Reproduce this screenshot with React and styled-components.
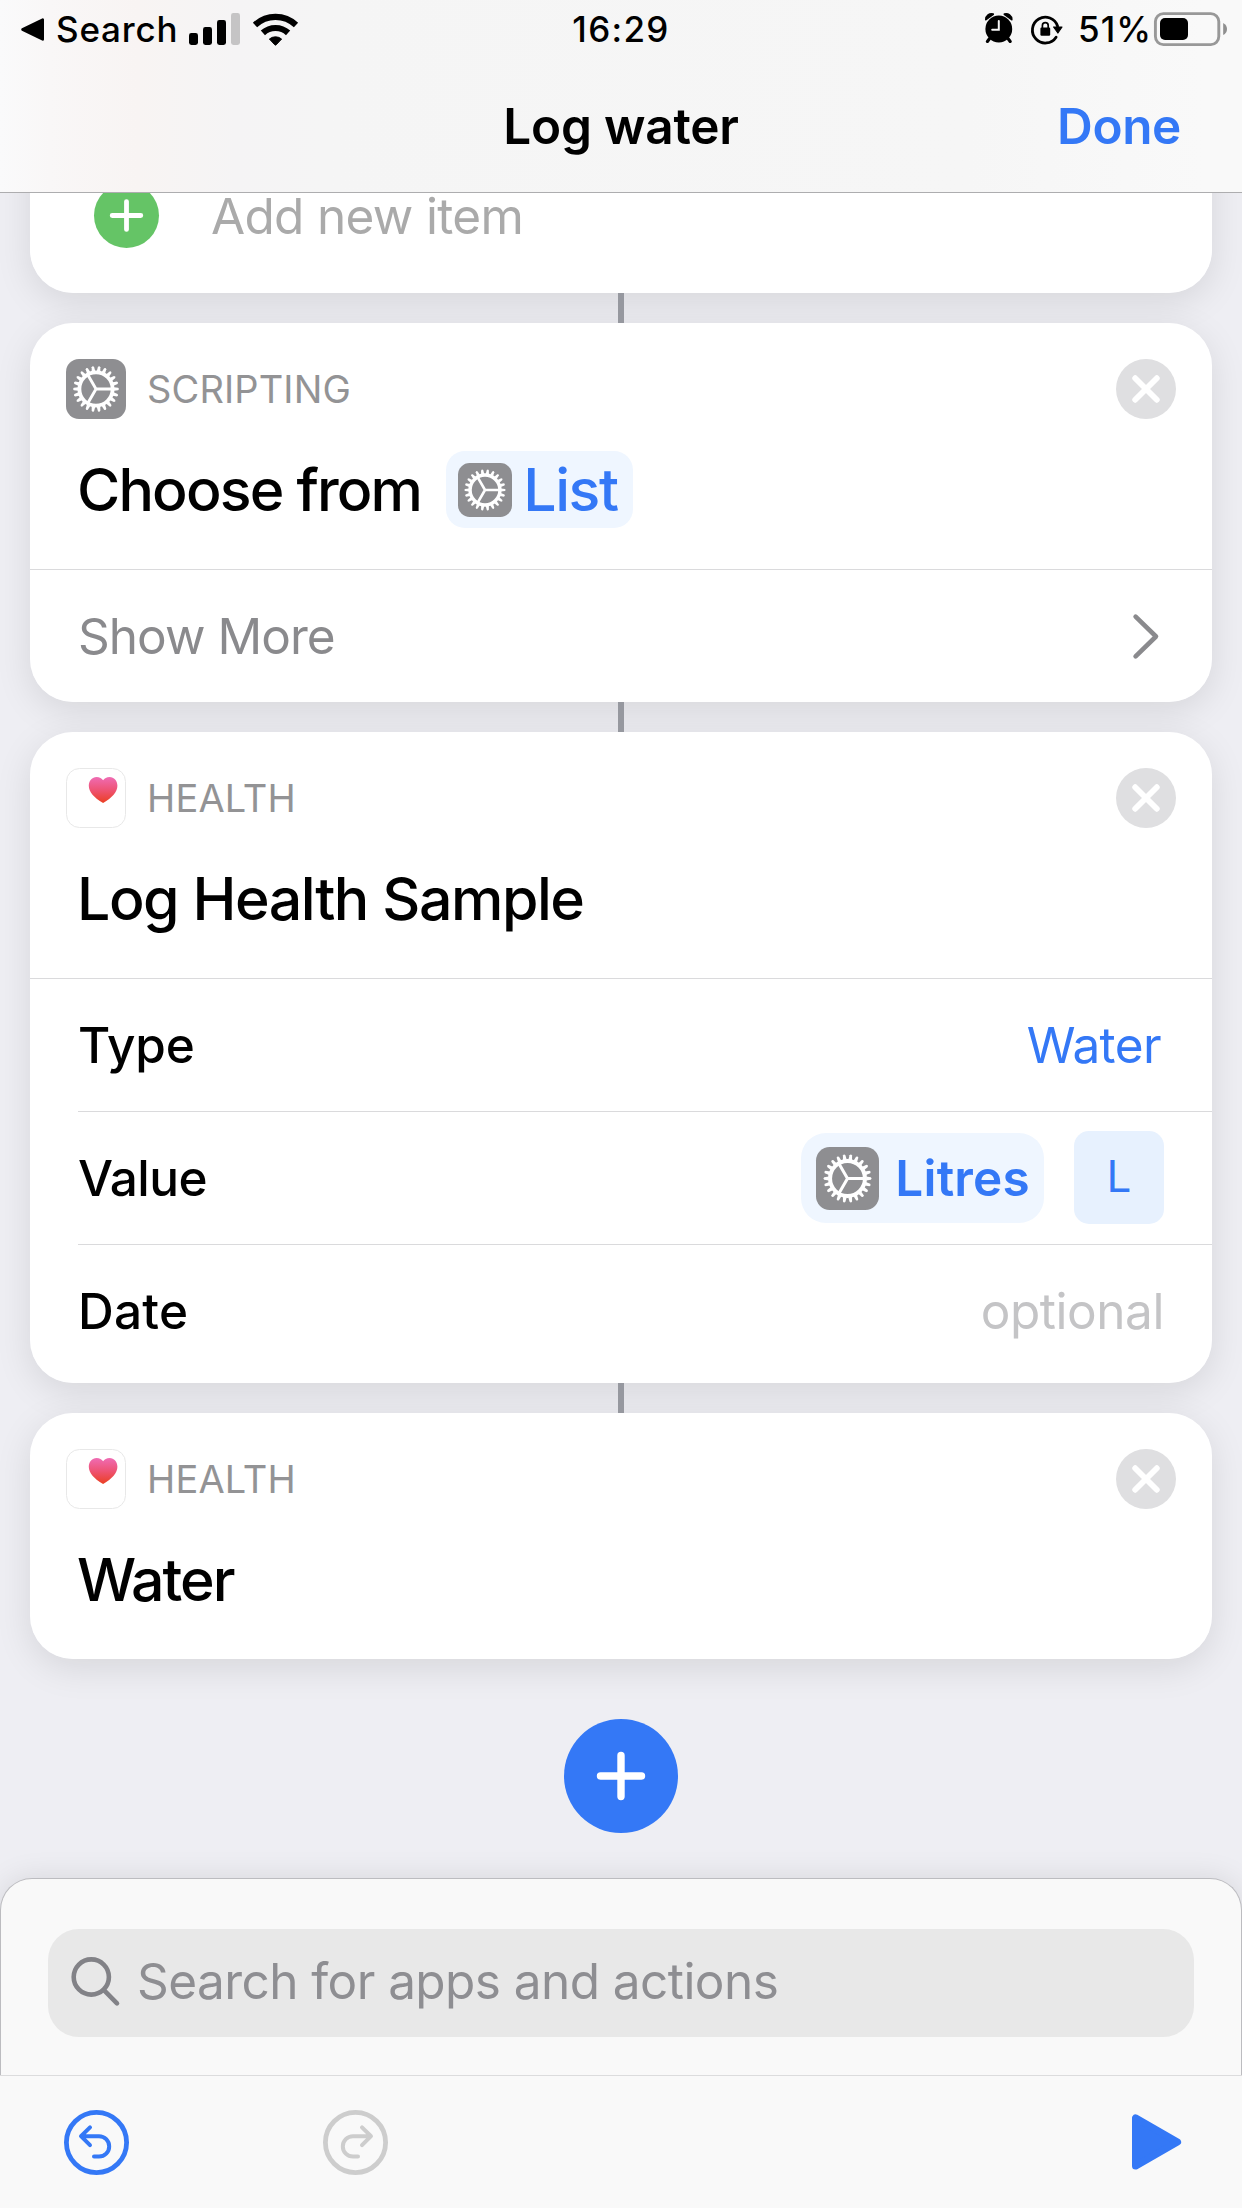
import React from 'react';
import styled, { createGlobalStyle } from 'styled-components';

const BLUE = '#3478f6';

const GlobalStyle = createGlobalStyle`
  *, *::before, *::after { box-sizing: border-box; }
  body {
    margin: 0;
    background: #eeeef3;
    font-family: Inter, "Liberation Sans", sans-serif;
    color: #000;
  }
  svg { display: block; flex: none; overflow: visible; }
`;

const Screen = styled.div`
  display: flex;
  flex-direction: column;
  width: 1242px;
  height: 2208px;
  overflow: hidden;
  background: #eeeef3;
  white-space: nowrap;
`;

const Text = styled.span`
  padding-top: 2px;
  font-size: ${(p) => p.$size || 49.5}px;
  font-weight: ${(p) => p.$weight || 400};
  letter-spacing: ${(p) => p.$track || 0}px;
  color: ${(p) => p.$color || '#000'};
  line-height: 1.2;
`;

/* ---------- header ---------- */

const Header = styled.header`
  position: relative;
  z-index: 2;
  flex: none;
  height: 193px;
  border-bottom: 1px solid #adadaf;
  background: linear-gradient(90deg, #fafafb 0%, #f9f7f7 4%, #f8f4f3 11%, #f5f4f5 19%, #f5f5f5 26%, #f6f6f6 78%, #f9f9f9 97%);
`;

const StatusBar = styled.div`
  display: grid;
  grid-template-columns: 1fr auto 1fr;
  align-items: center;
  height: 59px;
`;

const StatusLeft = styled.div`
  display: flex;
  align-items: center;
  padding-left: 21px;
`;

const StatusText = styled(Text)`
  padding: 0 0 2px;
  font-size: 35px;
  font-weight: 500;
`;

const BackLabel = styled(StatusText)`
  margin: 0 11px 0 12px;
`;

const StatusRight = styled.div`
  display: flex;
  align-items: center;
  justify-content: flex-end;
  padding-right: 14px;
`;

const Percent = styled(StatusText)`
  margin: 0 2px 0 15px;
`;

const NavBar = styled.div`
  display: grid;
  grid-template-columns: 1fr auto 1fr;
  align-items: center;
  height: 134px;
  padding: 0 61px;
`;

const DoneButton = styled(Text)`
  grid-column: 3;
  justify-self: end;
`;

const NavTitle = styled(Text)`
  grid-column: 2;
`;

/* ---------- cards ---------- */

const Flow = styled.main`
  flex: 1;
  min-height: 0;
  display: flex;
  flex-direction: column;
  align-items: center;
  isolation: isolate;
  padding: 0 30px;
`;

const Card = styled.section`
  position: relative;
  align-self: stretch;
  flex: none;
  border-radius: ${(p) => (p.$clipped ? '0 0 43px 43px' : '43px')};
  background: #fff;

  &::before {
    content: '';
    position: absolute;
    inset: ${(p) => (p.$clipped ? '-60px 0 0' : '0')};
    z-index: -1;
    border-radius: inherit;
    box-shadow: 0 9px 36px rgba(0, 0, 0, 0.1);
  }
`;

const Connector = styled.div`
  flex: none;
  width: 6px;
  height: 30px;
  background: #96989f;
`;

const AddItemRow = styled.div`
  display: flex;
  align-items: center;
  gap: 52px;
  height: 100px;
  padding: 0 64px 55px;
`;

const CardHead = styled.div`
  padding: 36px 36px 41px;
`;

const LabelRow = styled.div`
  display: flex;
  align-items: center;
  gap: 21px;
  height: 60px;
`;

const Category = styled(Text)`
  flex: 1;
`;

const TitleRow = styled.div`
  display: flex;
  align-items: center;
  gap: 25px;
  height: 77px;
  margin-top: 32px;
  padding-left: 11px;
`;

const Row = styled.div`
  display: flex;
  align-items: center;
  justify-content: space-between;
  height: 133px;
  margin-left: ${(p) => (p.$inset ? 48 : 0)}px;
  padding: 0 48px 0 ${(p) => (p.$inset ? 0 : 48)}px;
  border-top: 1px solid #dadadc;
`;

const Controls = styled.div`
  display: flex;
  align-items: center;
  gap: 30px;
`;

const Chip = styled.div`
  display: flex;
  align-items: center;
  gap: ${(p) => (p.$large ? 16 : 11.5)}px;
  height: ${(p) => (p.$large ? 90 : 77)}px;
  padding: ${(p) => (p.$large ? '0 14px 0 15.5px' : '0 15.5px 0 11.5px')};
  border-radius: ${(p) => (p.$large ? 25 : 19)}px;
  background: #eff6ff;
`;

const UnitBox = styled.div`
  display: flex;
  align-items: center;
  justify-content: center;
  width: 90px;
  height: 93px;
  margin-bottom: 1px;
  padding-bottom: 4px;
  border-radius: 15px;
  background: #e7f1fe;
`;

const RowValue = styled(Text)`
  margin-right: ${(p) => p.$gap || 0}px;
`;

const CardBottom = styled.div`
  height: 6px;
`;

const AddButton = styled.div`
  flex: none;
  display: flex;
  align-items: center;
  justify-content: center;
  width: 114px;
  height: 114px;
  margin-top: 60px;
  border-radius: 50%;
  background: ${BLUE};
`;

/* ---------- bottom ---------- */

const SearchPanel = styled.div`
  flex: none;
  height: 197px;
  padding: 50px 47px 0;
  border: 1px solid #bcbcc0;
  border-bottom: 0;
  border-radius: 32px 32px 0 0;
  background: #f9f9f9;
  box-shadow: 0 0 30px rgba(0, 0, 0, 0.1);
`;

const SearchField = styled.div`
  display: flex;
  align-items: center;
  gap: 17px;
  height: 108px;
  padding: 0 23px 3px;
  border-radius: 31px;
  background: #e8e8e8;
`;

const Placeholder = styled(Text)`
  padding-top: 0;
`;

const Toolbar = styled.footer`
  position: relative;
  flex: none;
  display: flex;
  align-items: center;
  height: 133px;
  padding: 0 61px 0 64px;
  border-top: 1px solid #dcdcdd;
  background: #f9f9f9;
`;

const HistoryButtons = styled.div`
  flex: 1;
  display: flex;
  gap: 194px;
`;

/* ---------- icons ---------- */

const BackIcon = () => (
  <svg width="23" height="59" viewBox="0 0 23 59">
    <path d="M1.5 29.5 L21.7 19.6 V39.4 Z" strokeWidth="2.6" stroke="#000" strokeLinejoin="round" />
  </svg>
);

const SignalIcon = () => (
  <svg width="52" height="59" viewBox="0 0 52 59">
    <rect x="0" y="33" width="9" height="12" rx="2.4" />
    <rect x="14" y="27" width="9" height="18" rx="2.4" />
    <rect x="28" y="20" width="9" height="25" rx="2.4" />
    <rect x="42" y="13" width="9" height="32" rx="2.4" fill="#c5c4c5" />
  </svg>
);

const WifiMark = styled.svg`
  margin-left: 12px;
`;

const WifiIcon = () => (
  <WifiMark width="45" height="59" viewBox="0 0 45 59">
    <g fill="none" stroke="#000" strokeWidth="6.2">
      <path d="M2 25 A29.8 29.8 0 0 1 43 25" />
      <path d="M9.9 32.9 A18.6 18.6 0 0 1 35.1 32.9" />
    </g>
    <path d="M16.4 39 A9.6 9.6 0 0 1 28.6 39 L23.2 44.8 Q22.5 45.5 21.8 44.8 Z" stroke="#000" strokeWidth="1" strokeLinejoin="round" />
  </WifiMark>
);

const AlarmMark = styled.svg`
  margin-right: 18px;
`;

const AlarmIcon = () => (
  <AlarmMark width="28" height="59" viewBox="0 0 28 59">
    <circle cx="13.8" cy="29" r="13.4" />
    <path d="M0.9 19.6 A5.6 5.6 0 0 1 8.2 14.2 Z M26.7 19.6 A5.6 5.6 0 0 0 19.4 14.2 Z" stroke="#000" strokeWidth="1.8" strokeLinejoin="round" />
    <path d="M4.6 38.6 L2.4 41.4 M23 38.6 L25.2 41.4" stroke="#000" strokeWidth="3.2" strokeLinecap="round" />
    <path d="M13.8 21 V29.8 H7.2" fill="none" stroke="#f6f6f6" strokeWidth="2" strokeLinecap="round" />
  </AlarmMark>
);

const RotationLockIcon = () => (
  <svg width="32" height="59" viewBox="0 0 32 59">
    <path d="M25.1 37.2 A12.9 12.9 0 1 1 26.6 26.2" fill="none" stroke="#000" strokeWidth="2.8" strokeLinecap="round" />
    <path d="M22.6 27 H31 L26.9 33 Z" stroke="#000" strokeWidth="1.2" strokeLinejoin="round" />
    <rect x="9.4" y="27.6" width="9.8" height="8.2" rx="1.2" />
    <path d="M11.4 28 V25.6 A2.9 2.9 0 0 1 17.2 25.6 V28" fill="none" stroke="#000" strokeWidth="1.7" />
  </svg>
);

const BatteryIcon = () => (
  <svg width="74" height="59" viewBox="0 0 74 59">
    <rect x="1.4" y="13.6" width="63.4" height="31" rx="8" fill="none" stroke="#989898" strokeWidth="2.9" />
    <rect x="6" y="18" width="28" height="22" rx="5" />
    <path d="M69.2 23 Q73 25 73 29 Q73 33 69.2 35 Z" fill="#8f8f8f" />
  </svg>
);

const PlusCircle = () => (
  <svg width="65" height="65" viewBox="0 0 65 65">
    <circle cx="32.5" cy="32.5" r="32.5" fill="#65c466" />
    <path d="M32.5 18.6 V46.4 M18.2 32.5 H46.8" stroke="#fff" strokeWidth="4.8" strokeLinecap="round" />
  </svg>
);

const teeth = Array.from({ length: 22 }, (_, i) => (i * 360) / 22);

const GearTile = ({ size = 60 }) => (
  <svg width={size} height={size} viewBox="0 0 60 60">
    <rect width="60" height="60" rx="13" fill="#8e8e91" />
    <g stroke="#fff" fill="none">
      <circle cx="30" cy="30" r="16.6" strokeWidth="3.8" />
      <path d="M30 30 H46.5 M30 30 L21.75 15.7 M30 30 L21.75 44.3" strokeWidth="2.9" />
    </g>
    {teeth.map((a) => (
      <path key={a} d="M47.8 28.2 L52.2 28.8 Q53.8 30 52.2 31.2 L47.8 31.8 Z" fill="#fff" transform={`rotate(${a} 30 30)`} />
    ))}
  </svg>
);

const HealthTile = () => (
  <svg width="60" height="60" viewBox="0 0 60 60">
    <defs>
      <linearGradient id="heart" x1="0" y1="0" x2="0" y2="1">
        <stop offset="0" stopColor="#ef6cb4" />
        <stop offset="0.5" stopColor="#ee5374" />
        <stop offset="1" stopColor="#eb3f22" />
      </linearGradient>
    </defs>
    <rect x="0.5" y="0.5" width="59" height="59" rx="13" fill="#fff" stroke="#e8e8e8" />
    <path
      d="M37.1 35 C28 29.8 22.8 24 22.8 17.8 C22.8 12.5 26.2 9 30.6 9 C33.6 9 35.8 10.3 37.1 12.2 C38.4 10.3 40.6 9 43.6 9 C48 9 51.4 12.5 51.4 17.8 C51.4 24 46.2 29.8 37.1 35 Z"
      fill="url(#heart)"
    />
  </svg>
);

const RemoveIcon = () => (
  <svg width="60" height="60" viewBox="0 0 60 60">
    <circle cx="30" cy="30" r="30" fill="#dfdfe1" />
    <path d="M19.2 19.2 L40.8 40.8 M40.8 19.2 L19.2 40.8" stroke="#fff" strokeWidth="5.8" strokeLinecap="round" />
  </svg>
);

const ChevronMark = styled.svg`
  margin-right: 5px;
`;

const Chevron = () => (
  <ChevronMark width="26" height="45" viewBox="0 0 26 45">
    <path d="M2.6 2.6 L23 22.5 L2.6 42.4" fill="none" stroke="#8a8a8d" strokeWidth="4.6" strokeLinecap="round" strokeLinejoin="round" />
  </ChevronMark>
);

const BigPlus = () => (
  <svg width="50" height="50" viewBox="0 0 50 50">
    <path d="M25 4.5 V45.5 M4.5 25 H45.5" stroke="#fff" strokeWidth="7.4" strokeLinecap="round" />
  </svg>
);

const SearchIcon = () => (
  <svg width="49" height="49" viewBox="0 0 49 49">
    <g fill="none" stroke="#828287" strokeWidth="4.6" strokeLinecap="round">
      <circle cx="20.3" cy="20" r="17.6" />
      <path d="M33.2 33.4 L46 46.4" />
    </g>
  </svg>
);

const HistoryIcon = ({ color, mirrored }) => (
  <svg width="65" height="65" viewBox="0 0 65 65">
    <g
      fill="none"
      stroke={color}
      strokeLinecap="round"
      strokeLinejoin="round"
      transform={mirrored ? 'translate(65 0) scale(-1 1)' : undefined}
    >
      <circle cx="32.5" cy="32.5" r="30.1" strokeWidth="4.8" />
      <path d="M26 17.3 L17 26.2 L26 35.2 M17.5 26.2 H35 A10.2 10.2 0 0 1 35 46.6 H30" strokeWidth="4" />
    </g>
  </svg>
);

const PlayIcon = () => (
  <svg width="49" height="56" viewBox="0 0 49 56">
    <path d="M3.5 3.9 V52.1 L45.6 28 Z" fill={BLUE} stroke={BLUE} strokeWidth="7" strokeLinejoin="round" />
  </svg>
);

/* ---------- page ---------- */

const ActionHead = ({ icon, category, track, children }) => (
  <CardHead>
    <LabelRow>
      {icon}
      <Category $size={38} $color="#939395" $track={track}>{category}</Category>
      <RemoveIcon />
    </LabelRow>
    <TitleRow>{children}</TitleRow>
  </CardHead>
);

export default function App() {
  return (
    <Screen>
      <GlobalStyle />
      <Header>
        <StatusBar>
          <StatusLeft>
            <BackIcon />
            <BackLabel $track={0.8}>Search</BackLabel>
            <SignalIcon />
            <WifiIcon />
          </StatusLeft>
          <StatusText $track={1.3}>16:29</StatusText>
          <StatusRight>
            <AlarmIcon />
            <RotationLockIcon />
            <Percent $track={1}>51%</Percent>
            <BatteryIcon />
          </StatusRight>
        </StatusBar>
        <NavBar>
          <NavTitle $weight={600} $track={-0.2}>Log water</NavTitle>
          <DoneButton $weight={600} $track={-0.39} $color={BLUE}>Done</DoneButton>
        </NavBar>
      </Header>

      <Flow>
        <Card $clipped>
          <AddItemRow>
            <PlusCircle />
            <Text $track={-0.68} $color="#aaaaaa">Add new item</Text>
          </AddItemRow>
        </Card>
        <Connector />
        <Card>
          <ActionHead icon={<GearTile />} category="SCRIPTING" track={0.12}>
            <Text $size={59} $weight={500} $track={-1.83}>Choose from</Text>
            <Chip>
              <GearTile size={54} />
              <Text $size={59} $weight={500} $track={-1.4} $color={BLUE}>List</Text>
            </Chip>
          </ActionHead>
          <Row>
            <Text $track={-0.96} $color="#8a8a8d">Show More</Text>
            <Chevron />
          </Row>
        </Card>
        <Connector />
        <Card>
          <ActionHead icon={<HealthTile />} category="HEALTH" track={0.15}>
            <Text $size={59} $weight={500} $track={-1.44}>Log Health Sample</Text>
          </ActionHead>
          <Row>
            <Text $weight={500} $track={-0.2}>Type</Text>
            <RowValue $track={-0.6} $color={BLUE} $gap={3}>Water</RowValue>
          </Row>
          <Row $inset>
            <Text $weight={500} $track={-0.6}>Value</Text>
            <Controls>
              <Chip $large>
                <GearTile size={63} />
                <Text $weight={600} $track={0.2} $color={BLUE}>Litres</Text>
              </Chip>
              <UnitBox>
                <Text $size={44} $color={BLUE}>L</Text>
              </UnitBox>
            </Controls>
          </Row>
          <Row $inset>
            <Text $weight={500} $track={0.27}>Date</Text>
            <RowValue $track={-0.45} $color="#c4c4c6">optional</RowValue>
          </Row>
          <CardBottom />
        </Card>
        <Connector />
        <Card>
          <ActionHead icon={<HealthTile />} category="HEALTH" track={0.15}>
            <Text $size={59} $weight={500} $track={-2}>Water</Text>
          </ActionHead>
        </Card>
        <AddButton>
          <BigPlus />
        </AddButton>
      </Flow>

      <SearchPanel>
        <SearchField>
          <SearchIcon />
          <Placeholder $track={-0.56} $color="#8e8e92">Search for apps and actions</Placeholder>
        </SearchField>
      </SearchPanel>
      <Toolbar>
        <HistoryButtons>
          <HistoryIcon color={BLUE} />
          <HistoryIcon color="#cdcdcd" mirrored />
        </HistoryButtons>
        <PlayIcon />
      </Toolbar>
    </Screen>
  );
}
